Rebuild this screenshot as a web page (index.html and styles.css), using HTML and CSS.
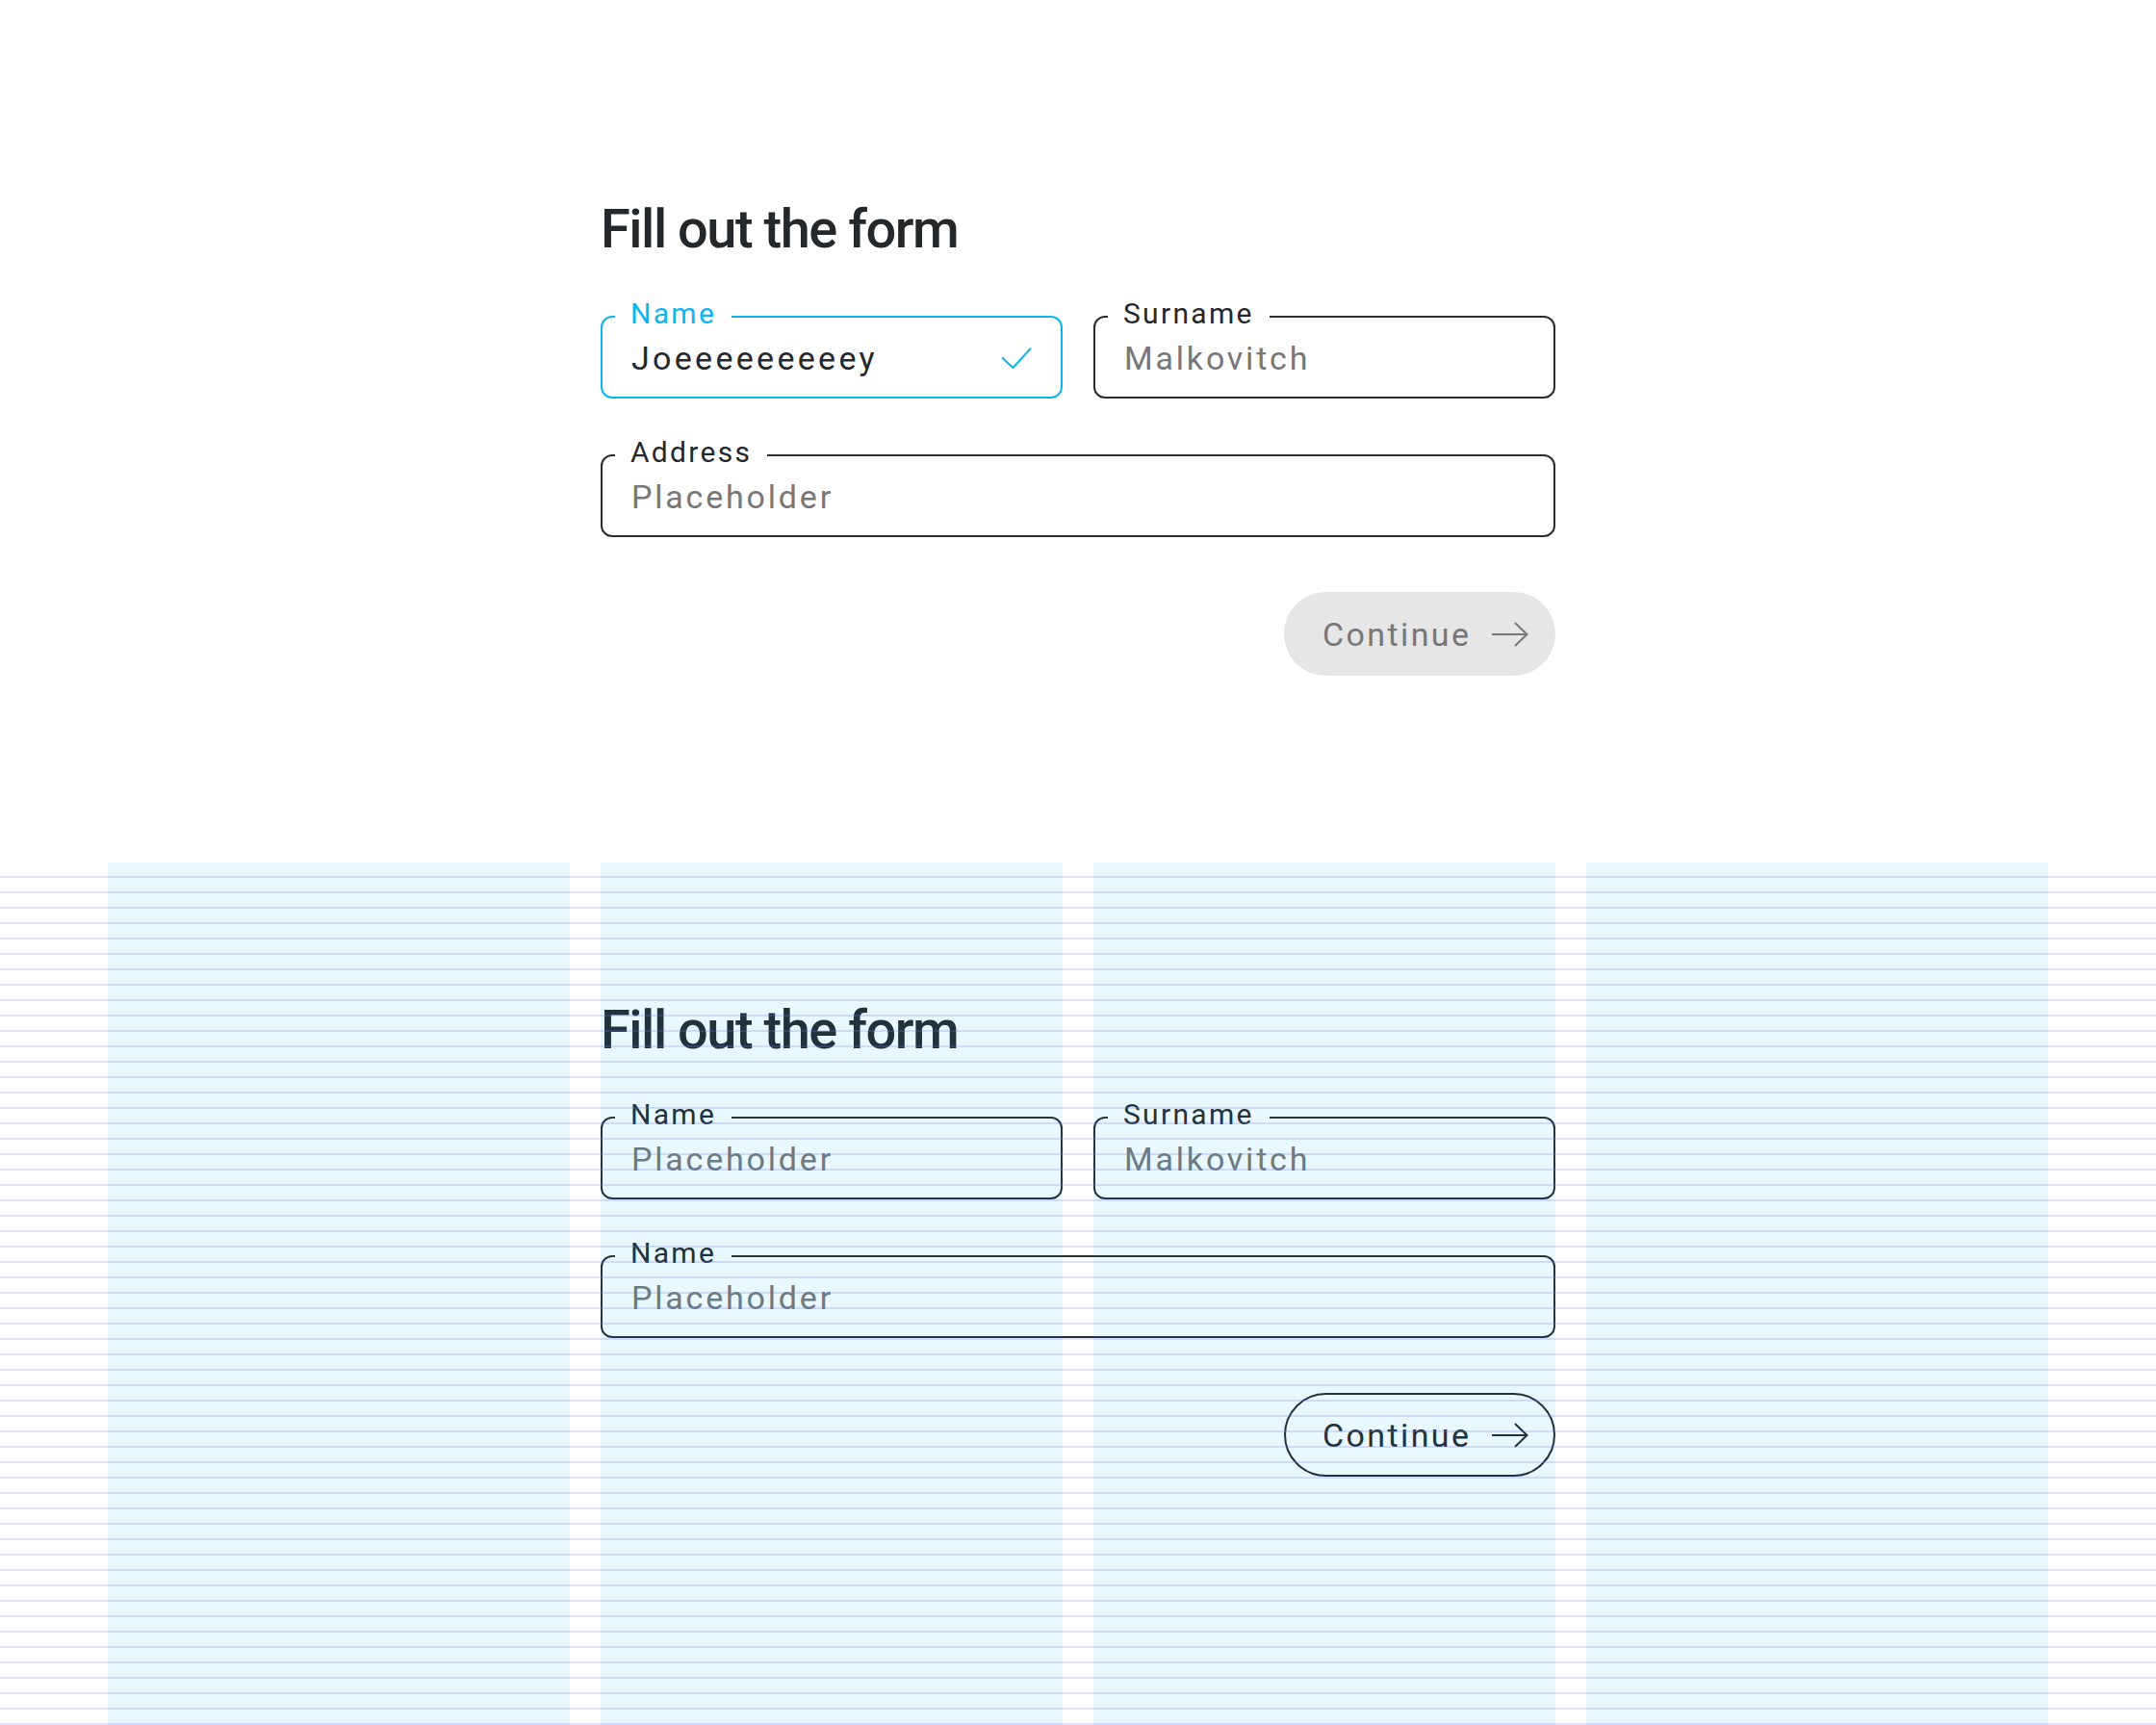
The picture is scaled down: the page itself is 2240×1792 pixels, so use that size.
FILE: index.html
```html
<!DOCTYPE html>
<html lang="en">
<head>
<meta charset="utf-8">
<title>Fill out the form</title>
<link rel="stylesheet" href="styles.css">
</head>
<body>
<main class="page">
  <section class="stage">
    <form class="form">
      <h1 class="title">Fill out the form</h1>
      <div class="pair">
        <div class="field field--active">
          <span class="label">Name</span>
          <div class="line">
            <span class="value">Joeeeeeeeeey</span>
            <svg class="check" width="32" height="22" viewBox="0 0 32 22"><path d="M1 10.5 L12.5 21 L31 0.8" fill="none" stroke="currentColor" stroke-width="2"/></svg>
          </div>
        </div>
        <div class="field">
          <span class="label">Surname</span>
          <div class="line"><span class="placeholder">Malkovitch</span></div>
        </div>
      </div>
      <div class="field field--wide">
        <span class="label">Address</span>
        <div class="line"><span class="placeholder">Placeholder</span></div>
      </div>
      <button type="button" class="btn btn--disabled">
        <span class="btn-text">Continue</span>
        <svg class="arrow" width="38" height="26" viewBox="0 0 38 26"><path d="M0 13 H36.5 M24 1 L36.5 13 L24 25" fill="none" stroke="currentColor" stroke-width="2"/></svg>
      </button>
    </form>
  </section>

  <section class="stage stage--grid">
    <form class="form">
      <h1 class="title">Fill out the form</h1>
      <div class="pair">
        <div class="field">
          <span class="label">Name</span>
          <div class="line"><span class="placeholder">Placeholder</span></div>
        </div>
        <div class="field">
          <span class="label">Surname</span>
          <div class="line"><span class="placeholder">Malkovitch</span></div>
        </div>
      </div>
      <div class="field field--wide">
        <span class="label">Name</span>
        <div class="line"><span class="placeholder">Placeholder</span></div>
      </div>
      <button type="button" class="btn btn--outline">
        <span class="btn-text">Continue</span>
        <svg class="arrow" width="38" height="26" viewBox="0 0 38 26"><path d="M0 13 H36.5 M24 1 L36.5 13 L24 25" fill="none" stroke="currentColor" stroke-width="2"/></svg>
      </button>
    </form>
    <div class="grid-overlay" aria-hidden="true">
      <div class="grid-col"></div>
      <div class="grid-col"></div>
      <div class="grid-col"></div>
      <div class="grid-col"></div>
    </div>
  </section>
</main>
</body>
</html>
```
FILE: styles.css
```css
html, body {
  margin: 0;
  padding: 0;
  background: #ffffff;
}

body {
  font-family: "Roboto", "Liberation Sans", sans-serif;
  color: #25282b;
}

.page {
  width: 2240px;
}

.stage {
  height: 896px;
  box-sizing: border-box;
  padding-top: 210px;
  display: flex;
  justify-content: center;
  align-items: flex-start;
}

.stage--grid {
  position: relative;
  padding-top: 146px;
}

.form {
  width: 992px;
  display: flex;
  flex-direction: column;
  margin: 0;
}

.title {
  margin: 0;
  font-size: 56px;
  line-height: 56px;
  font-weight: 500;
  letter-spacing: -1.5px;
  color: #25282b;
}

.pair {
  display: grid;
  grid-template-columns: 1fr 1fr;
  column-gap: 32px;
  margin-top: 62px;
}

.field {
  height: 86px;
  box-sizing: border-box;
  border: 2px solid #2a2d30;
  border-radius: 12px;
  padding: 0 30px;
  display: flex;
  flex-direction: column;
  align-items: flex-start;
  background: #ffffff;
}

.field--wide {
  margin-top: 58px;
}

.label {
  margin: -19px 0 0 -17px;
  padding: 0 16px;
  background: #ffffff;
  font-size: 30px;
  line-height: 30px;
  letter-spacing: 2.3px;
  color: #25282b;
}

.field--active {
  border-color: #0db4ef;
}

.field--active .label {
  color: #0db4ef;
}

.line {
  margin-top: 14px;
  height: 34px;
  width: 100%;
  display: flex;
  align-items: center;
}

.value {
  font-size: 34px;
  line-height: 34px;
  letter-spacing: 3.3px;
  color: #25282b;
}

.placeholder {
  font-size: 34px;
  line-height: 34px;
  letter-spacing: 2.8px;
  color: #777777;
}

.check {
  margin-left: auto;
  color: #0db4ef;
  display: block;
}

.btn {
  align-self: flex-end;
  margin-top: 57px;
  width: 282px;
  height: 87px;
  box-sizing: border-box;
  border-radius: 44px;
  padding: 0 28px 0 40px;
  display: flex;
  align-items: center;
  font-family: "Roboto", "Liberation Sans", sans-serif;
  font-size: 34px;
  line-height: 34px;
  letter-spacing: 2.4px;
  cursor: pointer;
}

.btn-text {
  display: block;
}

.arrow {
  display: block;
  margin-left: auto;
}

.btn--disabled {
  background: #e6e6e6;
  border: 0;
  color: #777777;
}

.btn--outline {
  background: transparent;
  border: 2px solid #25282b;
  color: #25282b;
  padding-left: 38px;
  padding-right: 26px;
}

.grid-overlay {
  position: absolute;
  inset: 0;
  pointer-events: none;
  display: grid;
  grid-template-columns: repeat(4, 480px);
  column-gap: 32px;
  justify-content: center;
  background: repeating-linear-gradient(
    to bottom,
    transparent 0,
    transparent 14px,
    rgba(120, 120, 230, 0.22) 14px,
    rgba(120, 120, 230, 0.22) 16px
  );
}

.grid-col {
  background: rgba(0, 168, 240, 0.085);
}
```
